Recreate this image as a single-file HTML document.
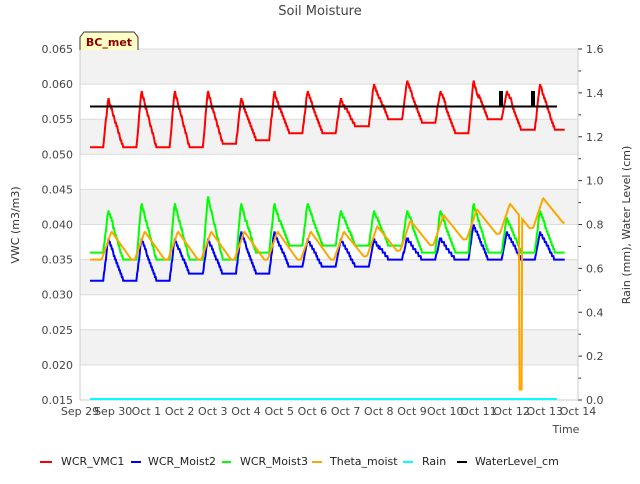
<!DOCTYPE html><html><head><style>body{margin:0;background:#fff;font-family:"DejaVu Sans","Liberation Sans",sans-serif}svg text{font-family:"DejaVu Sans","Liberation Sans",sans-serif}</style></head><body>
<svg id="s" width="640" height="480" xmlns="http://www.w3.org/2000/svg">
<rect x="80" y="49" width="498" height="351" fill="#fff"/>
<g fill="#f2f2f2"><rect x="80" y="49" width="498" height="35"/><rect x="80" y="119.5" width="498" height="35"/><rect x="80" y="189.8" width="498" height="35"/><rect x="80" y="260" width="498" height="35"/><rect x="80" y="330" width="498" height="35"/></g>
<g id="grid" stroke="#dcdcdc" stroke-width="1"></g>
<line x1="80" y1="49" x2="80" y2="400" stroke="#ccc"/>
<line x1="578" y1="49" x2="578" y2="400" stroke="#ccc"/>
<line x1="80" y1="400" x2="578" y2="400" stroke="#ccc"/>
<g id="lab" font-size="11" fill="#444"></g>
<g id="lines" fill="none" stroke-width="2"></g>
<text x="320" y="15" text-anchor="middle" font-size="13" fill="#444">Soil Moisture</text>
<text x="19" y="225" text-anchor="middle" font-size="11" fill="#333" transform="rotate(-90 19 225)">VWC (m3/m3)</text>
<text x="630" y="225" text-anchor="middle" font-size="11" fill="#333" transform="rotate(-90 630 225)">Rain (mm), Water Level (cm)</text>
<text x="566" y="433" text-anchor="middle" font-size="11" fill="#444">Time</text>
<path d="M80,50 L80,37 L84,32 L134,32 L138,37 L138,50" fill="#ffffc8" stroke="#333"/>
<text x="109" y="46" text-anchor="middle" font-size="11" font-weight="bold" fill="#8b0000">BC_met</text>
<g font-size="11" fill="#222">
<line x1="40" y1="462" x2="52" y2="462" stroke="#f00" stroke-width="2"/><text x="61" y="465">WCR_VMC1</text>
<line x1="131" y1="462" x2="141" y2="462" stroke="#00f" stroke-width="2"/><text x="148" y="465">WCR_Moist2</text>
<line x1="222" y1="462" x2="231" y2="462" stroke="#0f0" stroke-width="2"/><text x="240" y="465">WCR_Moist3</text>
<line x1="312" y1="462" x2="322" y2="462" stroke="orange" stroke-width="2"/><text x="330" y="465">Theta_moist</text>
<line x1="403" y1="462" x2="413" y2="462" stroke="cyan" stroke-width="2"/><text x="422" y="465">Rain</text>
<line x1="457" y1="462" x2="467" y2="462" stroke="#000" stroke-width="2"/><text x="475" y="465">WaterLevel_cm</text>
</g>
</svg>
<script>
var NS="http://www.w3.org/2000/svg";
function el(p,t,a,tx){var e=document.createElementNS(NS,t);for(var k in a)e.setAttribute(k,a[k]);if(tx)e.textContent=tx;document.getElementById(p).appendChild(e);return e;}
function Y(v){return 400-(v-0.015)/0.05*351;}
function X(d){return 80+d*33.2;}
for(var i=0;i<=10;i++){var v=0.015+i*0.005,y=Y(v);el("grid","line",{x1:80,x2:578,y1:y,y2:y});el("lab","text",{x:73,y:y+4,"text-anchor":"end"},v.toFixed(3));}
for(var i=0;i<=8;i++){var y=400-i*43.875;el("lab","text",{x:586,y:y+4},(i*0.2).toFixed(1));el("grid","line",{x1:578,x2:582,y1:y,y2:y,stroke:"#333"});if(i<8)el("grid","line",{x1:578,x2:581,y1:y-21.9,y2:y-21.9,stroke:"#333"});}
var xl=["Sep 29","Sep 30","Oct 1","Oct 2","Oct 3","Oct 4","Oct 5","Oct 6","Oct 7","Oct 8","Oct 9","Oct 10","Oct 11","Oct 12","Oct 13","Oct 14"];
for(var i=0;i<16;i++)el("lab","text",{x:X(i),y:415,"text-anchor":"middle"},xl[i]);
function g(u){return u<-0.15?0:u<0?(u+0.15)/0.15:Math.max(0,1-u/0.45);}
function series(base,peak,col,q){var d="";for(var t=0.3;t<=14.6;t+=0.02){var k=Math.min(13,Math.max(0,Math.floor(t)));var m=0;for(var j=0;j<15;j++)m=Math.max(m,g(t-(j+0.85)));var b=base[k],p=peak[Math.max(0,Math.min(13,Math.floor(t-0.5)))];var v=b+(p-b)*m;v=Math.round(v/q)*q;d+=(d?"L":"M")+X(t).toFixed(1)+","+Y(v).toFixed(1);}el("lines","path",{d:d,stroke:col});}
series([.0512,.051,.051,.051,.0515,.052,.053,.053,.054,.055,.0545,.053,.055,.0535],[.058,.059,.059,.059,.058,.059,.059,.058,.060,.0605,.059,.0605,.059,.060],"#f00",0.0005);
series([.032,.032,.032,.033,.033,.033,.034,.034,.034,.035,.035,.035,.035,.035],[.038,.038,.038,.038,.039,.039,.038,.038,.038,.038,.038,.040,.039,.039],"#00f",0.0005);
series([.036,.035,.035,.035,.035,.036,.037,.037,.037,.037,.036,.036,.036,.036],[.042,.043,.043,.044,.043,.043,.043,.042,.042,.042,.042,.043,.041,.042],"#0f0",0.0005);
(function(){var d="";for(var t=0.3;t<=14.6;t+=0.02){var base=0.035+Math.max(0,t-8)*0.0008;var m=0;for(var j=0;j<15;j++){var u=t-(j+0.95);m=Math.max(m,u<-0.3?0:u<0?(u+0.3)/0.3:Math.max(0,1-u/0.6));}var v=base+0.004*m;if(t>13.22&&t<13.3)v=0.0165;d+=(d?"L":"M")+X(t).toFixed(1)+","+Y(v).toFixed(1);}el("lines","path",{d:d,stroke:"orange"});})();
el("lines","path",{d:"M90,399L557,399",stroke:"cyan"});
el("lines","path",{d:"M90,106.5L500,106.5L500,92L502,92L502,106.5L532,106.5L532,92L534,92L534,106.5L557,106.5",stroke:"#000"});
</script>
</body></html>
